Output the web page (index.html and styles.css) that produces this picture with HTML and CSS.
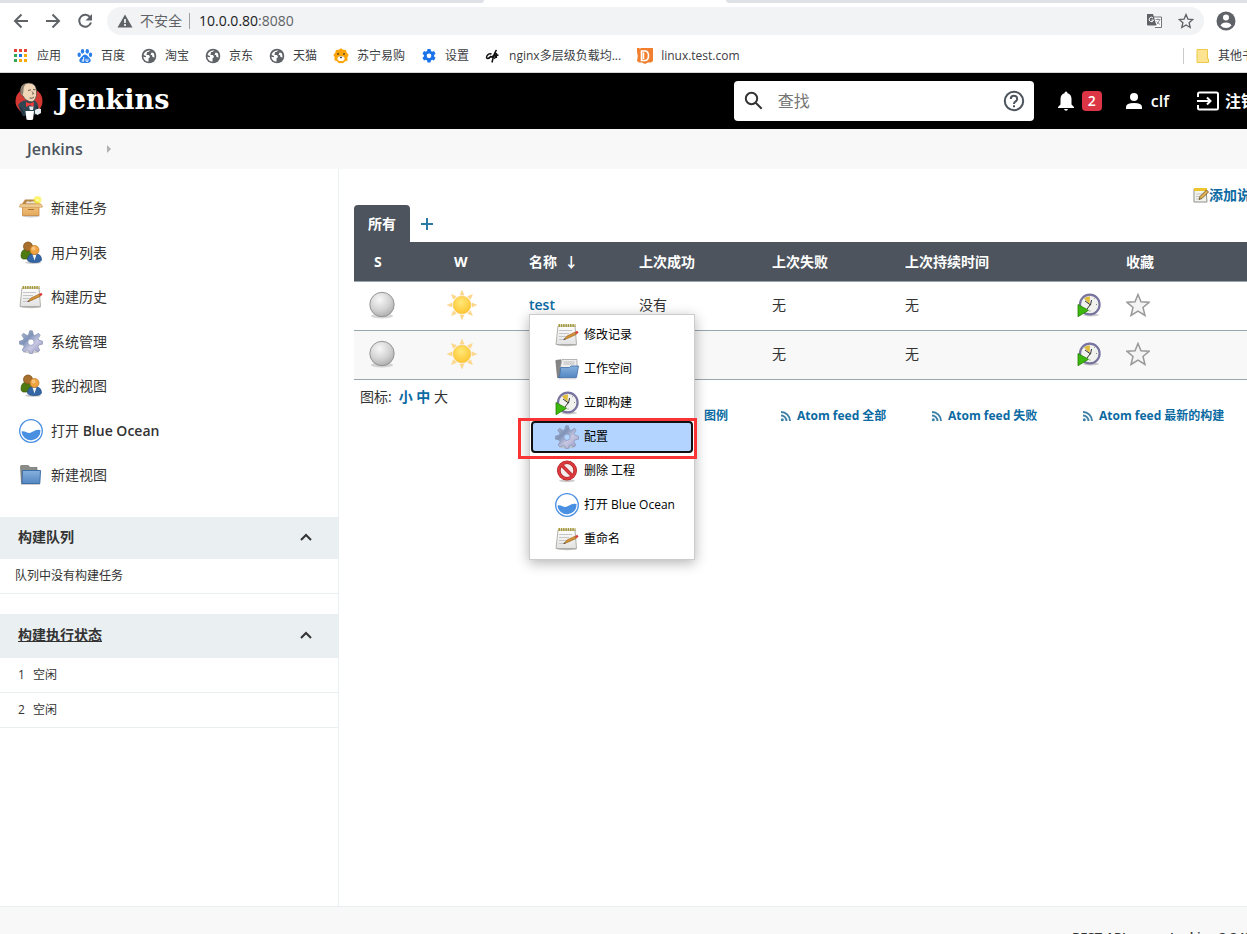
FILE: index.html
```html
<!DOCTYPE html>
<html lang="zh-CN">
<head>
<meta charset="utf-8">
<meta name="viewport" content="width=device-width, initial-scale=1">
<title>Jenkins</title>
<link rel="stylesheet" href="styles.css">
</head>
<body>
<svg class="sprite" width="0" height="0" aria-hidden="true">
  <defs>
    <radialGradient id="g-ball" cx=".4" cy=".3" r=".8"><stop offset="0" stop-color="#f8f8f8"/><stop offset=".55" stop-color="#d2d2d2"/><stop offset="1" stop-color="#a5a5a5"/></radialGradient>
    <radialGradient id="g-sun" cx=".45" cy=".35" r=".7"><stop offset="0" stop-color="#ffe878"/><stop offset="1" stop-color="#fdc32c"/></radialGradient>
    <linearGradient id="g-gear" x1="0" y1="0" x2="1" y2="1"><stop offset="0" stop-color="#b9c3d8"/><stop offset=".35" stop-color="#7f93b8"/><stop offset=".6" stop-color="#c9c8e3"/><stop offset="1" stop-color="#918fbd"/></linearGradient>
    <linearGradient id="g-folder" x1="0" y1="0" x2="0" y2="1"><stop offset="0" stop-color="#86b1dd"/><stop offset="1" stop-color="#5587c3"/></linearGradient>
    <linearGradient id="g-box" x1="0" y1="0" x2="0" y2="1"><stop offset="0" stop-color="#f2c47f"/><stop offset="1" stop-color="#e3a95c"/></linearGradient>
    <radialGradient id="g-glow"><stop offset="0" stop-color="#fff"/><stop offset=".4" stop-color="#fff64a"/><stop offset="1" stop-color="#fce94f" stop-opacity=".3"/></radialGradient>
    <linearGradient id="g-paper" x1="0" y1="0" x2="0" y2="1"><stop offset="0" stop-color="#fdfdfd"/><stop offset="1" stop-color="#e2e2e2"/></linearGradient>
  </defs>
  <symbol id="i-package" viewBox="0 0 24 24"><ellipse cx="12" cy="20" rx="9" ry="1.500" fill="#ccc"/><path d="M3 8l3-4.500h12L21 8v2H3z" fill="#b98645"/><path d="M7 6.500q2-2 4-.5l2-.8q3 0 4 2.300H7z" fill="#e9e6df"/><path d="M3.500 9.500h16.500V19.500h-16.500z" fill="url(#g-box)" stroke="#c68a44" stroke-width=".8"/><path d="M4 8H1.500L.3 11l3.700.5H20l3.700-.5L22 8z" fill="#eec98f" stroke="#c99552" stroke-width=".6"/><path d="M9 13.500h6" stroke="#a86f2d"/><circle cx="18.500" cy="4" r="4.500" fill="url(#g-glow)"/></symbol>
  <symbol id="i-people" viewBox="0 0 24 24"><ellipse cx="14" cy="21.500" rx="8" ry="1.500" fill="#ccc"/><path d="M2 15q0-7 6-7 6 0 6 7l-1 3H4q-2-.5-2-3z" fill="#4e7a12" stroke="#39590c" stroke-width=".7"/><circle cx="9" cy="5.500" r="4.500" fill="#a8702c" stroke="#74491a" stroke-width=".7"/><path d="M8.500 19q0-6.500 7-6.500t7 6.500q-1 2.500-7 2.500t-7-2.500z" fill="#3465a4" stroke="#204a87" stroke-width=".7"/><path d="M13.500 13.500h4l-2 6z" fill="#f4f4f4"/><circle cx="15.500" cy="9" r="4.500" fill="#f0a340" stroke="#bd7420" stroke-width=".7"/><circle cx="14.500" cy="7.500" r="2" fill="#f7c57d"/></symbol>
  <symbol id="i-notepad" viewBox="0 0 24 24"><ellipse cx="12" cy="22" rx="10" ry="1.200" fill="#bbb"/><path d="M3 3h17l1.500 18.500H1z" fill="url(#g-paper)" stroke="#a8a8a2" stroke-width=".9"/><path d="M4 7.500h13M4 10.500h10M4 13.500h7M4 16.500h5" stroke="#c6c6c6"/><path d="M3.500 2.500h17" stroke="#a79a3b" stroke-width="3" stroke-dasharray="1.500 .8"/><path d="M9 16.500l3-3.500 8-3.800 1.200 2.200-8.700 4z" fill="#d89335" stroke="#915e1c" stroke-width=".6"/><path d="M20 9l2.300-1.200 1.200 2-2 1.500z" fill="#dd3b38"/><path d="M8 17l1.800-1.500 1 .8z" fill="#333"/></symbol>
  <symbol id="i-gear" viewBox="0 0 24 24"><ellipse cx="12" cy="22" rx="8" ry="1.500" fill="#bbb" opacity=".7"/><path fill-rule="evenodd" d="M10.700.8h2.600l1.200 4.200 1.400.6 3.600-2.300 1.700 1.800-2.100 3.500.6 1.400 4 1.300v2.800l-4 1-.8 1.600 1.900 3.500-1.700 1.700-3.400-1.900-1.500.8-1 3h-2.400l-1-3-1.500-.8-3.400 1.900-1.700-1.700 1.900-3.500-.8-1.600-4-1v-2.800l4-1.300.6-1.400-2.100-3.500 1.700-1.800 3.600 2.300L9.500 5zM12 9a3.200 3.200 0 1 0 0 6.400A3.200 3.200 0 0 0 12 9z" fill="url(#g-gear)" stroke="#8390b0" stroke-width=".7"/></symbol>
  <symbol id="i-ocean" viewBox="0 0 24 24"><circle cx="12" cy="12" r="11.300" fill="#fff" stroke="#4a90e2" stroke-width="1.300"/><path d="M2.500 12.500q2-1 5 .7 3 1.800 6.500-.6 3.500-2.500 7.500-1.500A9.500 9.500 0 0 1 2.500 12.500z" fill="#4a90e2"/></symbol>
  <symbol id="i-folder" viewBox="0 0 24 24"><path d="M1.500 3.500q0-1 1-1H9q1 0 1.500 2h7.500v16H2.500z" fill="#8a8c88" stroke="#6c6e6b" stroke-width=".7"/><path d="M3.500 7.500h18l-.7 13H3z" fill="url(#g-folder)" stroke="#3e6ea8"/><path d="M2 21.500h19" stroke="#ccc"/></symbol>
  <symbol id="i-folder-open" viewBox="0 0 24 24"><path d="M.8 3.500l5-.8.500 18H2.500z" fill="#858585" stroke="#666" stroke-width=".6"/><path d="M7 2.500h15v9H5z" fill="#eee" stroke="#999" stroke-width=".7"/><path d="M8.500 5h11M8.500 7h11" stroke="#bbb"/><path d="M5.500 10.500h9l1.500-1.500h7.500L21.500 20.500H3.500q2-2 2-10z" fill="url(#g-folder)" stroke="#3e6ea8" stroke-width=".8"/><path d="M4 21.800h17" stroke="#ccc"/></symbol>
  <symbol id="i-clock" viewBox="0 0 24 24"><ellipse cx="14" cy="22" rx="8" ry="1.500" fill="#aaa" opacity=".6"/><circle cx="12.800" cy="11.500" r="9.800" fill="#f1f1ed" stroke="#77749f" stroke-width="2.200"/><path d="M12.500 11L7 5.500q3-2.500 6-2z" fill="#dfbd3d"/><path d="M8 8l5.500 4 1-5M13 12l-3 4" stroke="#333" fill="none"/><path d="M19 11.500h1M12.500 18h1M17 6l.7-.7" stroke="#888"/><path d="M1 11.500v12.200l10.500-6.400z" fill="#3db80e" stroke="#248003" stroke-width=".8"/></symbol>
  <symbol id="i-ban" viewBox="0 0 24 24"><ellipse cx="12" cy="21.800" rx="8" ry="1.500" fill="#aaa" opacity=".6"/><circle cx="12" cy="11.500" r="8.200" fill="#f5eded" stroke="#a81e20" stroke-width="3.600"/><path d="M6.500 6l11 11" stroke="#b22124" stroke-width="3.400"/><circle cx="12" cy="11.500" r="8.200" fill="none" stroke="#db3a3d" stroke-width="2.400"/><path d="M6.500 6l11 11" stroke="#db3a3d" stroke-width="2.200"/></symbol>
  <symbol id="i-ball" viewBox="0 0 32 32"><ellipse cx="16" cy="27" rx="11" ry="2.500" fill="#bbb" opacity=".6"/><circle cx="16" cy="15.500" r="12.200" fill="url(#g-ball)" stroke="#8d8d8d" stroke-width=".9"/></symbol>
  <symbol id="i-sun" viewBox="0 0 32 32"><g fill="#ffd98a" stroke="#f9cf80" stroke-width=".5"><path d="M14 6l2-4.700L18 6zM14 26l2 4.700 2-4.700zM6 14l-4.700 2L6 18zM26 14l4.700 2-4.700 2z"/><path transform="rotate(45 16 16)" d="M14 6l2-4.700L18 6zM14 26l2 4.700 2-4.700zM6 14l-4.700 2L6 18zM26 14l4.700 2-4.700 2z"/></g><circle cx="16" cy="16" r="8.800" fill="url(#g-sun)" stroke="#fbc95a" stroke-width=".8"/></symbol>
  <symbol id="i-star" viewBox="0 0 24 24"><path d="M12 1.500l3 7.300 8 .5-6 5.200 2 8-7-4.300-7 4.300 2-8L1 9.300l8-.5z" fill="#f4f4f4" stroke="#999" stroke-width="1.500"/></symbol>
  <symbol id="i-rss" viewBox="0 0 12 12"><g fill="none" stroke="#3d80a8" stroke-width="1.900"><path d="M1 5.500A5.500 5.500 0 0 1 6.500 11M1 2a9 9 0 0 1 9 9"/></g><circle cx="2.300" cy="9.700" r="1.500" fill="#3d80a8"/></symbol>
  <symbol id="i-globe" viewBox="0 0 16 16"><circle cx="8" cy="8" r="7.300" fill="#5f6368"/><path d="M9.500 2.200q-1.700 2-3.500 2L5.500 7H8l1 2-1.500 1.500v3.200a5.800 5.800 0 0 1-5.200-4.900l2.700.4V8L2.500 7q.7-4 7-4.800zM10.500 4.500l2 .5q1.300 2 1 4.500l-2-.5-.5-2H9.500z" fill="#fff"/></symbol>
  <symbol id="i-up" viewBox="0 0 12 12"><path d="M1 9l5-5 5 5" fill="none" stroke="#333" stroke-width="2"/></symbol>
</svg>

<div class="page">
  <div class="tabstrip"><span class="tab-rest tab-before"></span><span class="tab-active"></span><span class="tab-rest tab-after"></span></div>
  <div class="toolbar">
    <button class="tool" aria-label="后退"><svg width="16" height="16" viewBox="0 0 16 16"><path d="M15 8H2.500M8.500 1.500L2 8l6.500 6.500" fill="none" stroke="#5f6368" stroke-width="2"/></svg></button>
    <button class="tool" aria-label="前进"><svg width="16" height="16" viewBox="0 0 16 16"><path d="M1 8h12.500M7.500 1.500L14 8l-6.500 6.500" fill="none" stroke="#5f6368" stroke-width="2"/></svg></button>
    <button class="tool" aria-label="刷新"><svg width="16" height="16" viewBox="0 0 16 16"><path d="M13.300 4.500A6 6 0 1 0 14 9.500" fill="none" stroke="#5f6368" stroke-width="2"/><path d="M15 1v6.500H8.500z" fill="#5f6368"/></svg></button>
    <div class="omnibox">
      <svg width="16" height="16" viewBox="0 0 16 16"><path d="M8 1.500L15.500 14.500H.5z" fill="#5f6368"/><path d="M8 6v4M8 11v2" stroke="#fff" stroke-width="1.600"/></svg>
      <span class="insecure">不安全</span>
      <span class="url"><b>10.0.0.80</b>:8080</span>
      <button class="omni-tool" aria-label="翻译"><svg width="16" height="16" viewBox="0 0 16 16"><path d="M7 4h8.500v10.500H9" fill="#fff" stroke="#70757a"/><path d="M1 1h6l3.500 11.500H2q-1 0-1-1z" fill="#5f6368"/><path d="M7 5a2.200 2.200 0 1 0 .5 2H5.500" fill="none" stroke="#fff"/><path d="M9.500 6.500h5M12 5.500v1M13.500 7q-1 3-3 4.500M10.500 8.500l3.500 3" stroke="#70757a" stroke-width=".8" fill="none"/></svg></button>
      <button class="omni-tool" aria-label="收藏"><svg width="16" height="16" viewBox="0 0 16 16"><path d="M8 1.500l1.900 4.600 4.900.4-3.700 3.200 1.100 4.800L8 12l-4.200 2.500 1.100-4.800L1.200 6.500l4.900-.4z" fill="none" stroke="#5f6368" stroke-width="1.300"/></svg></button>
    </div>
    <button class="avatar" aria-label="用户"><svg width="20" height="20" viewBox="0 0 20 20"><circle cx="10" cy="10" r="9.500" fill="#5f6368"/><circle cx="10" cy="6.500" r="3" fill="#fff"/><path d="M4.500 14.500q1.500-3 5.500-3t5.500 3q-2.200 2.500-5.500 2.500t-5.500-2.500z" fill="#fff"/></svg></button>
  </div>
  <nav class="bookmarks" aria-label="书签">
    <a href="#"><svg width="16" height="16" viewBox="0 0 16 16"><path d="M1 1h3v3H1zM6 1h3v3H6zM11 1h3v3h-3z" fill="#ea4335"/><path d="M1 6h3v3H1zM1 11h3v3H1z" fill="#34a853"/><path d="M6 6h3v3H6z" fill="#1a73e8"/><path d="M11 6h3v3h-3zM6 11h3v3H6zM11 11h3v3h-3z" fill="#fbab05"/></svg>应用</a>
    <a href="#"><svg width="16" height="16" viewBox="0 0 16 16" fill="#2b7de9"><ellipse cx="5.500" cy="3.300" rx="1.700" ry="2.400"/><ellipse cx="10.300" cy="3.300" rx="1.700" ry="2.400"/><ellipse cx="2.200" cy="6.800" rx="1.700" ry="2.200"/><ellipse cx="13.500" cy="6.800" rx="1.700" ry="2.200"/><path d="M8 6.500q2 0 3.500 2.500 3 2.500 2 4.500-.8 1.800-5.500 1.500-4.700.3-5.500-1.500-1-2 2-4.500Q6 6.500 8 6.500z"/><path d="M6.700 9v4.300H5.500q-1-1 .5-2h.7M9 10.800v2.500h2v-2.500" fill="none" stroke="#fff" stroke-width=".9"/></svg>百度</a>
    <a href="#"><svg width="16" height="16"><use href="#i-globe"/></svg>淘宝</a>
    <a href="#"><svg width="16" height="16"><use href="#i-globe"/></svg>京东</a>
    <a href="#"><svg width="16" height="16"><use href="#i-globe"/></svg>天猫</a>
    <a href="#"><svg width="16" height="16" viewBox="0 0 16 16"><path d="M8 .3l2.300 1.400 2.800.2.500 2.700 2 2.200-1.200 2.600.2 3-2.700 1L10 15.300 8 15l-2 .3-2-2-2.600-1 .2-3L.4 6.800l2-2.200.5-2.700 2.800-.2z" fill="#fba50b"/><ellipse cx="8" cy="10.500" rx="3.500" ry="2.600" fill="#fff"/><path d="M5 5v2M11 5v2" stroke="#222"/><path d="M6.500 8.800h3L8 10.500z" fill="#222"/></svg>苏宁易购</a>
    <a href="#"><svg width="16" height="16" viewBox="0 0 24 24"><path fill-rule="evenodd" d="M9.700 1.500h4.600l.6 3 1.800 1 2.800-1 2.300 4-2.200 2v2.200l2.200 2-2.300 4-2.800-1-1.800 1-.6 3H9.700l-.6-3-1.800-1-2.800 1-2.300-4 2.200-2v-2.200l-2.200-2 2.300-4 2.800 1 1.800-1zM12 8.200a3.500 3.500 0 1 0 0 7 3.500 3.500 0 0 0 0-7z" fill="#1a73e8"/></svg>设置</a>
    <a href="#"><svg width="16" height="16" viewBox="0 0 16 16"><path d="M6.500 6Q4 5 2.200 7.500q-1.500 3 .3 3 2 0 3.500-2.500M11.500 2Q9 5 7 14.500M8 8q4-4.500 3.500-1-.5 3-2.500 3.500M11.500 6l-.2 4M5.500 9l8-2" fill="none" stroke="#111" stroke-width="1.500"/></svg>nginx多层级负载均...</a>
    <a href="#"><svg width="16" height="16" viewBox="0 0 16 16"><path d="M0 0h2l1 .7L4 0h12v13l-2 1.500H11L8 16l-3-1.500H2L0 13l.8-5L0 4z" fill="#f08030"/><path d="M4.500 3v9.500h4q3-.5 3-4.700T8.500 3zM6.500 4.500v6.500" fill="none" stroke="#fff" stroke-width="1.600"/></svg>linux.test.com</a>
    <a href="#" class="other"><svg width="14" height="14" viewBox="0 0 14 14"><path d="M1 .5h10.500v9.500h1v3.500H1z" fill="#fee391" stroke="#ecc94b"/></svg>其他书签</a>
  </nav>

  <header class="header">
    <a href="#" class="brand" aria-label="Jenkins">
      <svg width="30" height="40" viewBox="0 0 30 40"><ellipse cx="15" cy="20" rx="13.500" ry="13" fill="#d33833"/><path d="M4 24q2-3.500 6-4.500h9q4 0 5 5l1 5-3 4-13 1.500q-3-6-5-11z" fill="#2f4552"/><path d="M6.500 10.500Q6.500 2.500 14 2q7.500-.5 8.500 7 .8 6-1.500 9.500Q19 22 15.500 20.500q-5-1.500-6.500-5.500-2.500-1-2.500-4.500z" fill="#efd6b8" stroke="#2a2a2a" stroke-width=".6"/><path d="M6.500 10.500q-.5-7 5.500-8-2.500 3-2.500 6.500l-.5 5q-2-.5-2.500-3.500z" fill="#8b7e72"/><path d="M14 9.500l3-.7M19 8.700h2.500M18 10.500l1.700 2-1.700.8M15.500 17q3 1 4.500-1" fill="none" stroke="#5a4a40" stroke-width=".9"/><path d="M12 21l4 1.500 4-1.500-.5 5-3.500-2-4 2z" fill="#ef3d3a"/><path d="M15 25.500l1 3.500h3l.500-3.500z" fill="#dfe6ea"/><path d="M11.500 30h8.500l-1 8.500q-3.500 1-6.500 0z" fill="#fff"/><path d="M21 29q3.500-2.500 6-1v4l-3.500 2-2.500-1.500z" fill="#e9eef0"/><path d="M6 26l4 7M22.500 25l1 3" stroke="#182830"/></svg>
      <span>Jenkins</span>
    </a>
    <div class="search">
      <svg width="20" height="20" viewBox="0 0 20 20"><path d="M7.500 1.800a5.700 5.700 0 1 1 0 11.400 5.700 5.700 0 0 1 0-11.400zM11.700 11.700l6 6" fill="none" stroke="#333" stroke-width="2"/></svg>
      <input type="text" placeholder="查找" aria-label="查找">
      <button aria-label="帮助"><svg width="22" height="22" viewBox="0 0 22 22"><g fill="none" stroke="#4d545d" stroke-width="2"><circle cx="11" cy="11" r="9.200"/><path d="M7.800 9q0-3.200 3.200-3.200T14.200 9q0 1.400-1.600 2.400T11 14"/></g><path d="M10 15.200h2v2h-2z" fill="#4d545d"/></svg></button>
    </div>
    <a href="#" class="alerts"><svg width="18" height="20" viewBox="0 0 18 20"><path d="M9 .5q1.500 0 1.500 1.700Q14.500 3.500 14.500 8v5.500L17 16v1H1v-1l2.500-2.500V8q0-4.500 4-5.800Q7.500.5 9 .5zM7 18h4q-.5 1.800-2 1.800T7 18z" fill="#fff"/></svg><span class="badge">2</span></a>
    <a href="#" class="user"><svg width="18" height="18" viewBox="0 0 18 18"><circle cx="9" cy="5" r="4" fill="#fff"/><path d="M1 17v-2q0-4 8-4t8 4v2z" fill="#fff"/></svg>clf</a>
    <a href="#" class="logout"><svg width="22" height="20" viewBox="0 0 22 20"><path d="M1 6V3q0-1.500 1.500-1.500h17Q21 1.500 21 3v14q0 1.500-1.500 1.500h-17Q1 18.500 1 17v-3M0 10h13M10 6.500l3.500 3.500-3.500 3.500" fill="none" stroke="#fff" stroke-width="2"/></svg>注销</a>
  </header>
  <nav class="crumbs" aria-label="路径"><a href="#">Jenkins</a><svg width="6" height="8" viewBox="0 0 6 8"><path d="M1 0l4 4-4 4z" fill="#b0b0b0"/></svg></nav>

  <div class="body">
    <aside class="side">
      <ul class="tasks">
        <li><a href="#"><svg width="24" height="24"><use href="#i-package"/></svg>新建任务</a></li>
        <li><a href="#"><svg width="24" height="24"><use href="#i-people"/></svg>用户列表</a></li>
        <li><a href="#"><svg width="24" height="24"><use href="#i-notepad"/></svg>构建历史</a></li>
        <li><a href="#"><svg width="24" height="24"><use href="#i-gear"/></svg>系统管理</a></li>
        <li><a href="#"><svg width="24" height="24"><use href="#i-people"/></svg>我的视图</a></li>
        <li><a href="#"><svg width="24" height="24"><use href="#i-ocean"/></svg><span>打开 <b>Blue Ocean</b></span></a></li>
        <li><a href="#"><svg width="24" height="24"><use href="#i-folder"/></svg>新建视图</a></li>
      </ul>
      <section class="pane">
        <h2>构建队列<button aria-label="折叠构建队列"><svg width="12" height="12"><use href="#i-up"/></svg></button></h2>
        <p class="queue">队列中没有构建任务</p>
      </section>
      <section class="pane">
        <h2><a href="#">构建执行状态</a><button aria-label="折叠执行状态"><svg width="12" height="12"><use href="#i-up"/></svg></button></h2>
        <p class="executor"><span>1</span>空闲</p>
        <p class="executor"><span>2</span>空闲</p>
      </section>
    </aside>

    <main class="main">
      <a href="#" class="describe"><svg width="16" height="16" viewBox="0 0 16 16"><path d="M1 2h12l1 13H1z" fill="#f3f3ee" stroke="#8f8f8a"/><path d="M1 2.500h13" stroke="#edc52c" stroke-width="3"/><path d="M3 7h7M3 9.500h5M3 12h3" stroke="#c4c4c4"/><path d="M6 12.500l1-3L13.500 3l2 2L9 11.500z" fill="#e2b352" stroke="#5f4a1c" stroke-width=".8"/></svg>添加说明</a>
      <div class="views"><a href="#" class="view">所有</a><a href="#" class="new-view" aria-label="新建视图"><svg width="12" height="12" viewBox="0 0 12 12"><path d="M6 0v12M0 6h12" stroke="#2b7ba5" stroke-width="2"/></svg></a></div>
      <table class="jobs">
        <colgroup><col class="c-status"><col class="c-weather"><col class="c-name"><col class="c-last"><col class="c-last"><col class="c-duration"><col class="c-build"><col></colgroup>
        <thead><tr><th class="ic">S</th><th class="ic">W</th><th>名称 &nbsp;↓</th><th>上次成功</th><th>上次失败</th><th>上次持续时间</th><th></th><th>收藏</th></tr></thead>
        <tbody>
          <tr>
            <td class="ic"><svg width="32" height="32"><use href="#i-ball"/></svg></td>
            <td class="ic"><svg width="32" height="32"><use href="#i-sun"/></svg></td>
            <td class="name"><a href="#">test</a>
              <div class="menu">
                <a href="#"><svg width="24" height="24"><use href="#i-notepad"/></svg>修改记录</a>
                <a href="#"><svg width="24" height="24"><use href="#i-folder-open"/></svg>工作空间</a>
                <a href="#"><svg width="24" height="24"><use href="#i-clock"/></svg>立即构建</a>
                <a href="#" class="selected"><svg width="24" height="24"><use href="#i-gear"/></svg>配置<span class="marker"></span></a>
                <a href="#"><svg width="24" height="24"><use href="#i-ban"/></svg>删除 工程</a>
                <a href="#"><svg width="24" height="24"><use href="#i-ocean"/></svg>打开 Blue Ocean</a>
                <a href="#"><svg width="24" height="24"><use href="#i-notepad"/></svg>重命名</a>
              </div>
            </td>
            <td>没有</td><td>无</td><td>无</td>
            <td><svg width="24" height="24"><use href="#i-clock"/></svg></td>
            <td><svg width="24" height="24"><use href="#i-star"/></svg></td>
          </tr>
          <tr>
            <td class="ic"><svg width="32" height="32"><use href="#i-ball"/></svg></td>
            <td class="ic"><svg width="32" height="32"><use href="#i-sun"/></svg></td>
            <td></td><td></td><td>无</td><td>无</td>
            <td><svg width="24" height="24"><use href="#i-clock"/></svg></td>
            <td><svg width="24" height="24"><use href="#i-star"/></svg></td>
          </tr>
        </tbody>
      </table>
      <div class="under">
        <div class="sizes">图标:&ensp;<a href="#">小</a> <a href="#">中</a> 大</div>
        <div class="feeds">
          <a href="#">图例</a>
          <a href="#"><svg width="12" height="12"><use href="#i-rss"/></svg>Atom feed 全部</a>
          <a href="#"><svg width="12" height="12"><use href="#i-rss"/></svg>Atom feed 失败</a>
          <a href="#"><svg width="12" height="12"><use href="#i-rss"/></svg>Atom feed 最新的构建</a>
        </div>
      </div>
    </main>
  </div>
  <footer class="footer"><a href="#">REST API</a><a href="#">Jenkins 2.249.1</a></footer>
</div>
</body>
</html>
```
FILE: styles.css
```css
* { box-sizing: border-box; }
body {
  margin: 0;
  height: 100vh;
  overflow: hidden;
  background: #fff;
  color: #333;
  font: 14px/20px "Open Sans", "Noto Sans CJK SC", sans-serif;
}
a { color: inherit; text-decoration: none; }
button { padding: 0; border: 0; background: none; display: flex; align-items: center; justify-content: center; }
svg { display: block; flex: none; }
.sprite { position: absolute; }

/* Content extends past the right edge of the window */
.page { width: calc(100% + 40px); height: 100%; display: flex; flex-direction: column; }

.tabstrip { display: flex; height: 3px; flex: none; }
.tab-rest { background: #dee1e6; }
.tab-before { width: 484px; border-bottom-right-radius: 3px; }
.tab-active { width: 242px; }
.tab-after { flex: 1; border-bottom-left-radius: 3px; }

.toolbar { display: flex; align-items: center; flex: none; padding: 4px 51px 4px 13px; }
.tool { width: 16px; height: 16px; margin-right: 16px; }
.omnibox {
  flex: 1; height: 28px; margin-right: 12px; margin-left: -2px; padding: 0 10px;
  display: flex; align-items: center; background: #f1f3f4; border-radius: 14px; color: #5f6368;
}
.insecure { padding: 0 7px; margin-right: 9px; line-height: 16px; border-right: 1px solid #9aa0a6; }
.url { flex: 1; color: #5f6368; }
.url b { color: #202124; font-weight: 400; }
.omni-tool { width: 16px; margin-left: 16px; }
.avatar { width: 20px; }

.bookmarks {
  display: flex; align-items: center; flex: none; gap: 16px; height: 34px;
  padding: 0 21px 0 13px; border-bottom: 1px solid #d5d5d5;
  font-size: 12px; color: #3c4043;
}
.bookmarks a { display: flex; align-items: center; gap: 8px; height: 16px; white-space: nowrap; }
.bookmarks .other { margin-left: auto; padding-left: 12px; border-left: 1px solid #c8cacd; }

.header {
  display: flex; align-items: center; flex: none; height: 56px; padding: 0 30px 0 14px;
  background: #000; color: #fff; font-weight: 600; font-size: 16px;
}
.header > a { display: flex; align-items: center; }
.brand { margin-right: auto; gap: 12px; font: bold 27px/40px "DejaVu Serif", serif; }
.brand span { padding-bottom: 2px; }
.search { display: flex; align-items: center; width: 300px; height: 40px; padding: 0 9px 0 10px; background: #fff; border-radius: 4px; }
.search input {
  flex: 1; min-width: 0; margin-left: 14px; padding: 0; border: 0; outline: 0; background: none;
  font: 16px/24px "Open Sans", "Noto Sans CJK SC", sans-serif;
}
.search input::placeholder { color: #757575; }
.alerts { margin-left: 23px; gap: 7px; }
.badge { width: 20px; height: 20px; border-radius: 4px; background: #dc3545; font-size: 14px; text-align: center; }
.user { margin-left: 23px; gap: 8px; }
.logout { margin-left: 28px; gap: 6px; }

.crumbs { display: flex; align-items: center; flex: none; gap: 23px; height: 40px; padding-left: 27px; background: #f8f8f8; font-size: 16px; font-weight: 600; color: #4d545d; }

.body { display: flex; flex: 1; min-height: 0; }
.side { width: 339px; flex: none; padding-top: 17px; border-right: 1px solid #eaf0f2; }
.tasks { margin: 0 0 20px; padding: 0 19px; list-style: none; }
.tasks li { height: 44px; display: flex; align-items: center; }
.tasks li:nth-child(even) { height: 45px; }
.tasks a { display: flex; align-items: center; gap: 8px; }
.tasks b { font-weight: 600; }
.pane { margin-bottom: 20px; font-size: 12px; }
.pane h2 {
  display: flex; align-items: center; justify-content: space-between; margin: 0; height: 42px; padding: 0 26px 2px 18px;
  background: #eaeff2; font-size: 14px; line-height: 20px; font-weight: 700;
}
.pane + .pane h2 { height: 44px; }
.pane h2 a { text-decoration: underline; }
.pane p { margin: 0; padding: 7px 15px; border-bottom: 1px solid #eaeff2; }
.pane .executor { display: flex; gap: 8px; padding-left: 18px; }

.main { flex: 1; min-width: 0; padding: 16px 0 0 15px; }
.describe { display: flex; justify-content: flex-end; align-items: center; padding-right: 22px; color: #0b6aa2; font-weight: 600; }
.views { display: flex; align-items: center; }
.view { padding: 9px 14px 8px; background: #4d545d; color: #fff; border-radius: 4px 4px 0 0; font-weight: 600; }
.new-view { padding: 11px; }
.jobs { width: 100%; table-layout: fixed; border-collapse: collapse; text-align: left; }
.c-status { width: 80px; }
.c-weather { width: 79px; }
.c-name { width: 111px; }
.c-last { width: 133px; }
.c-duration { width: 172px; }
.c-build { width: 49px; }
.jobs th { height: 39px; padding: 1px 0 0 15px; background: #4d545d; color: #fff; font-weight: 600; border-bottom: 1px solid #98a6ad; }
.jobs th:nth-child(3) { padding-left: 16px; }
.jobs th.ic { padding-left: 20px; font-weight: 700; }
.jobs td { height: 49px; padding: 0 0 1px 15px; border-bottom: 1px solid #98a6ad; }
.jobs td.ic { padding-left: 12px; }
.jobs tbody tr:nth-child(even) { background: #f8f8f8; }
.jobs td.name { position: relative; padding-left: 16px; }
.name > a { color: #0b6aa2; font-weight: 600; }

.menu {
  position: absolute; z-index: 2; left: 16px; top: 32px; width: 166px; padding: 4px 1px;
  display: flex; flex-direction: column; gap: 2px;
  background: #fff; border: 1px solid #ccc; box-shadow: 0 3px 12px rgba(0, 0, 0, .3);
  color: #000; font-size: 12px;
}
.menu a { position: relative; display: flex; align-items: center; gap: 5px; height: 32px; padding-left: 22px; border: 2px solid transparent; border-radius: 4px; white-space: nowrap; }
.menu .selected { background: #b3d4ff; border-color: #101010; }
.marker { position: absolute; top: -5px; right: -6px; bottom: -8px; left: -15px; border: 3px solid #fa3434; }

.under { display: flex; justify-content: space-between; padding: 7px 60px 0 6px; }
.sizes a, .feeds { color: #0b6aa2; font-weight: 700; }
.feeds { display: grid; grid-template-columns: 76px 151px 151px 145px; padding-top: 19px; font-size: 12px; }
.feeds a { display: flex; align-items: center; gap: 5px; white-space: nowrap; }

.footer { display: flex; flex: none; justify-content: flex-end; gap: 44px; height: 28px; padding: 20px 24px 0; background: #f8f8f8; border-top: 1px solid #eaf0f2; font-size: 13px; font-weight: 600; }
```
